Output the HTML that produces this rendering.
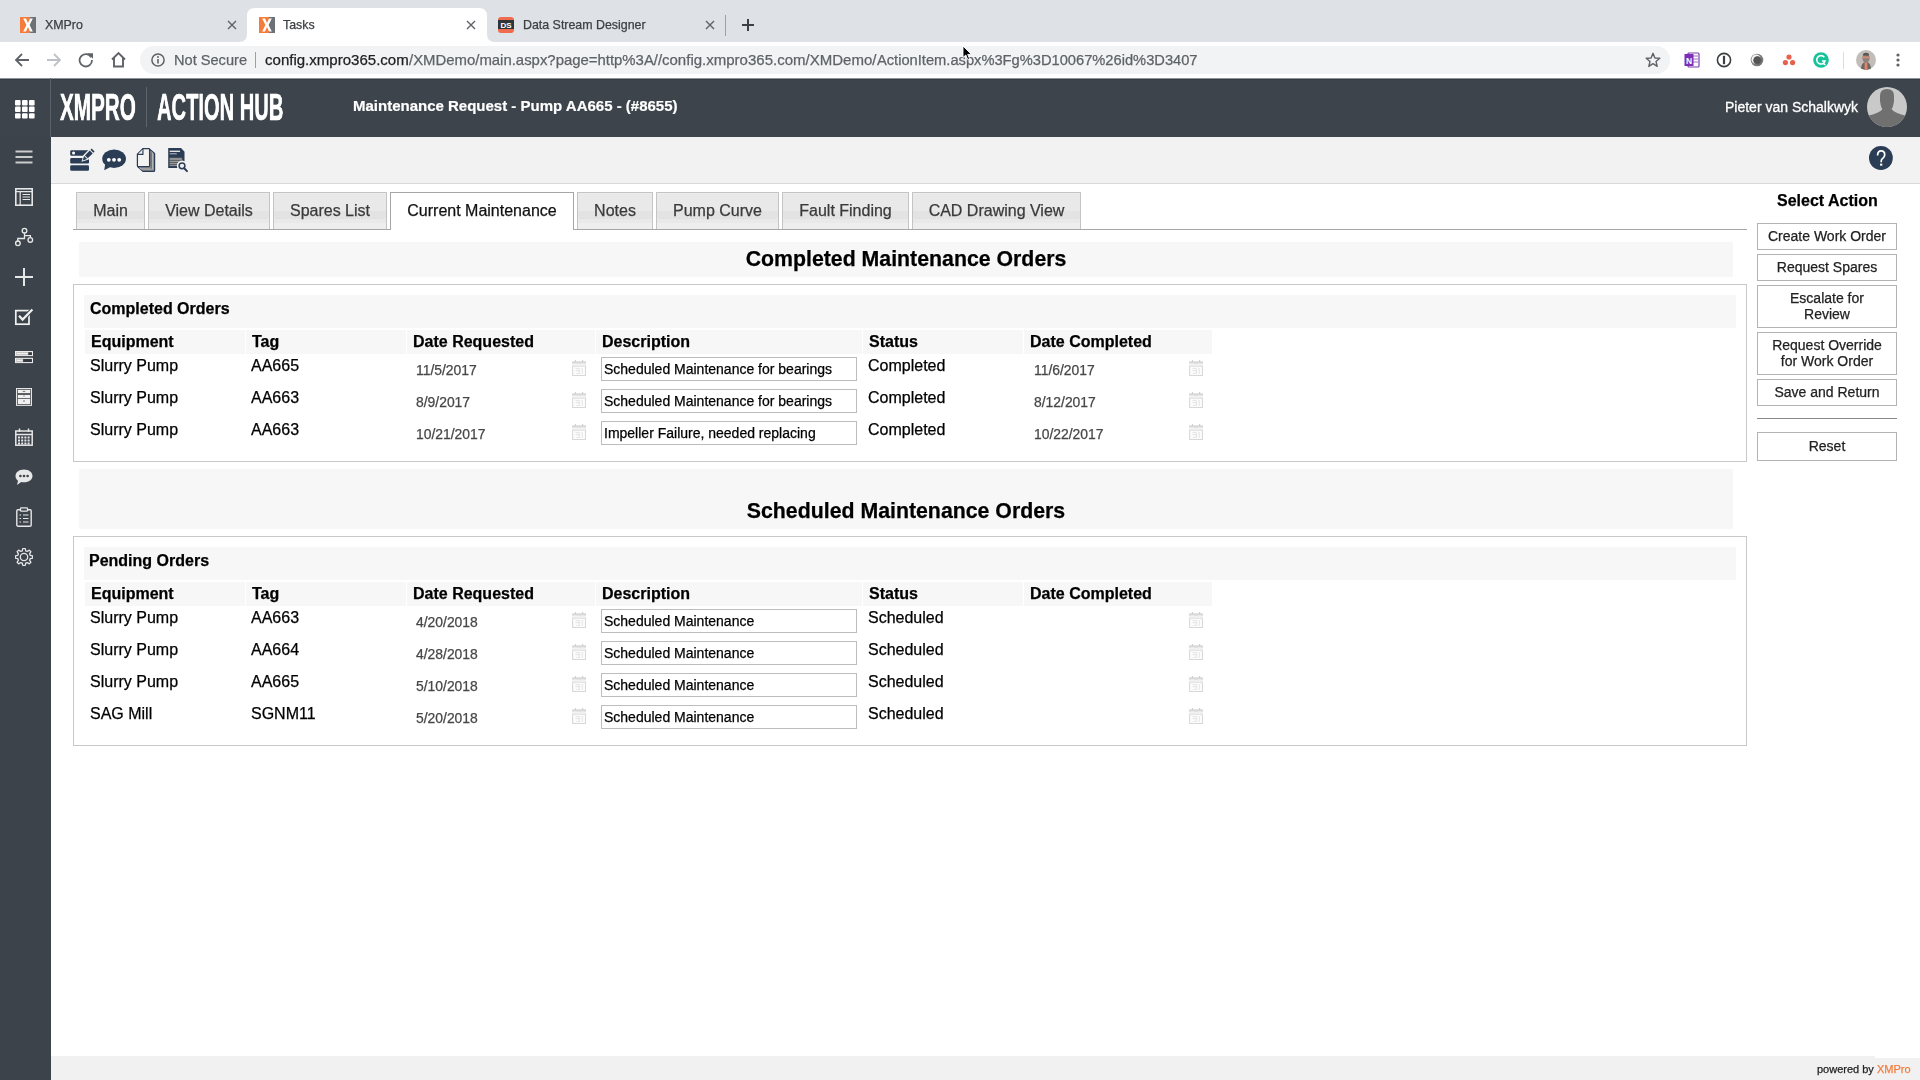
<!DOCTYPE html>
<html><head><meta charset="utf-8"><title>Tasks</title>
<style>
*{box-sizing:border-box;margin:0;padding:0}
html,body{width:1920px;height:1080px;overflow:hidden;background:#fff;font-family:"Liberation Sans",sans-serif;color:#000}
.r{position:absolute;display:block}
.t{position:absolute;white-space:nowrap;font-family:"Liberation Sans",sans-serif;will-change:transform;-webkit-text-stroke:0.25px currentColor}
.logo{color:#fff;font-weight:bold;transform-origin:0 0;letter-spacing:0;-webkit-text-stroke:0.7px #fff}
.tab{border:1px solid #c4c4c4;border-bottom:none;background:linear-gradient(to bottom,#ededed 0,#ededed 1px,#e9e9e9 1px,#e9e9e9 18px,#e3e3e3 18px,#e3e3e3 25px,#e9e9e9 25px,#e9e9e9 30px,#eeeeee 30px)}
.tab::after{content:'';position:absolute;left:2px;right:2px;top:25px;border-top:1px dotted #dadada}
.tab.act::after{display:none}
.tab.act{background:#fff;border-color:#a6a6a6}
</style></head><body>
<div class="r" style="left:0px;top:0px;width:1920px;height:42px;background:#dee1e6"></div>
<svg class="r" style="left:239px;top:8px" width="256" height="34" viewBox="0 0 256 34"><path d="M0 34 Q8 34 8 26 L8 8 Q8 0 16 0 L240 0 Q248 0 248 8 L248 26 Q248 34 256 34 Z" fill="#fff"/></svg>
<svg class="r" style="left:20px;top:17px;" width="16" height="16" viewBox="0 0 16 16"><rect x="0" y="0" width="10" height="16" fill="#f47c3c"/><rect x="10" y="0" width="6" height="16" fill="#6d7278"/><path d="M3.2 1.5 L6 1.5 L8 6 L10 1.5 L12.8 1.5 L9.6 8 L12.8 14.5 L10 14.5 L8 10 L6 14.5 L3.2 14.5 L6.4 8 Z" fill="#fff"/></svg>
<div class="t" style="left:44.5px;top:18px;font-size:12.4px;line-height:15px;font-weight:normal;color:#3c4043;">XMPro</div>
<svg class="r" style="left:259px;top:17px;" width="16" height="16" viewBox="0 0 16 16"><rect x="0" y="0" width="10" height="16" fill="#f47c3c"/><rect x="10" y="0" width="6" height="16" fill="#6d7278"/><path d="M3.2 1.5 L6 1.5 L8 6 L10 1.5 L12.8 1.5 L9.6 8 L12.8 14.5 L10 14.5 L8 10 L6 14.5 L3.2 14.5 L6.4 8 Z" fill="#fff"/></svg>
<div class="t" style="left:283px;top:18px;font-size:12.4px;line-height:15px;font-weight:normal;color:#3c4043;">Tasks</div>
<svg class="r" style="left:498px;top:17px;" width="16" height="16" viewBox="0 0 16 16"><rect x="0" y="0" width="16" height="16" rx="3" fill="#ee6b4d"/><rect x="0" y="3" width="16" height="9" fill="#2f3439"/><text x="8" y="10.6" font-family="Liberation Sans" font-weight="bold" font-size="8" fill="#fff" text-anchor="middle">DS</text></svg>
<div class="t" style="left:522.5px;top:18px;font-size:12.4px;line-height:15px;font-weight:normal;color:#3c4043;">Data Stream Designer</div>
<svg class="r" style="left:227px;top:20px;" width="10" height="10" viewBox="0 0 10 10"><path d="M1 1 L9 9 M9 1 L1 9" stroke="#5f6368" stroke-width="1.4"/></svg>
<svg class="r" style="left:466px;top:20px;" width="10" height="10" viewBox="0 0 10 10"><path d="M1 1 L9 9 M9 1 L1 9" stroke="#5f6368" stroke-width="1.4"/></svg>
<svg class="r" style="left:705px;top:20px;" width="10" height="10" viewBox="0 0 10 10"><path d="M1 1 L9 9 M9 1 L1 9" stroke="#5f6368" stroke-width="1.4"/></svg>
<div class="r" style="left:725px;top:15px;width:1px;height:21px;background:#9aa0a6"></div>
<svg class="r" style="left:741px;top:18px;" width="14" height="14" viewBox="0 0 14 14"><path d="M7 1 V13 M1 7 H13" stroke="#3c4043" stroke-width="2"/></svg>
<div class="r" style="left:0px;top:42px;width:1920px;height:36px;background:#fff"></div>
<svg class="r" style="left:14px;top:52px;" width="16" height="16" viewBox="0 0 16 16"><path d="M15 8 H2.5 M8 2 L2 8 L8 14" stroke="#5f6368" stroke-width="1.8" fill="none"/></svg>
<svg class="r" style="left:46px;top:52px;" width="16" height="16" viewBox="0 0 16 16"><path d="M1 8 H13.5 M8 2 L14 8 L8 14" stroke="#bdc1c6" stroke-width="1.8" fill="none"/></svg>
<svg class="r" style="left:78px;top:52px;" width="16" height="16" viewBox="0 0 16 16"><path d="M13.2 5.2 A6.2 6.2 0 1 0 14 8" stroke="#5f6368" stroke-width="1.8" fill="none"/><path d="M9.5 1.2 L15 1.2 L15 6.8 Z" fill="#5f6368"/></svg>
<svg class="r" style="left:110px;top:51px;" width="17" height="17" viewBox="0 0 17 17"><path d="M2 8.5 L8.5 2 L15 8.5 M4 7 V15.5 H13 V7" stroke="#5f6368" stroke-width="1.9" fill="none" stroke-linejoin="miter"/></svg>
<div class="r" style="left:140px;top:46px;width:1530px;height:28px;background:#f1f3f4;border-radius:14px"></div>
<svg class="r" style="left:151px;top:53px;" width="14" height="14" viewBox="0 0 14 14"><circle cx="7" cy="7" r="6.1" stroke="#5f6368" stroke-width="1.5" fill="none"/><rect x="6.2" y="6" width="1.6" height="4.5" fill="#5f6368"/><circle cx="7" cy="4" r="0.95" fill="#5f6368"/></svg>
<div class="t" style="left:174.3px;top:51px;font-size:14.6px;line-height:18px;font-weight:normal;color:#5f6368;">Not Secure</div>
<div class="r" style="left:255px;top:52px;width:1px;height:16px;background:#9aa0a6"></div>
<div class="t" style="left:265.4px;top:51px;font-size:15.04px;line-height:18px;font-weight:normal;color:#202124;">config.xmpro365.com</div>
<div class="t" style="left:409.2px;top:51px;font-size:14.91px;line-height:18px;font-weight:normal;color:#5f6368;">/XMDemo/main.aspx?page=http%3A//</div>
<div class="t" style="left:662.4px;top:51px;font-size:15.02px;line-height:18px;font-weight:normal;color:#5f6368;">config.xmpro365.com/XMDemo/</div>
<div class="t" style="left:876.9px;top:51px;font-size:14.68px;line-height:18px;font-weight:normal;color:#5f6368;">ActionItem.aspx%3Fg%3D10067%26id%3D3407</div>
<svg class="r" style="left:1645px;top:52px;" width="16" height="16" viewBox="0 0 16 16"><path d="M8 1.3 L9.9 6 L14.8 6.3 L11 9.5 L12.2 14.4 L8 11.7 L3.8 14.4 L5 9.5 L1.2 6.3 L6.1 6 Z" stroke="#5f6368" stroke-width="1.4" fill="none" stroke-linejoin="round"/></svg>
<svg class="r" style="left:1684px;top:52px;" width="16" height="16" viewBox="0 0 16 16"><rect x="4" y="1" width="11" height="14" rx="1" fill="#fff" stroke="#7c3fb0" stroke-width="1.2"/><path d="M9 4 H14 M9 7 H14 M9 10 H14" stroke="#9e6cc9" stroke-width="1"/><rect x="0.5" y="2" width="9" height="12" fill="#7c2fb5"/><text x="5" y="11.5" font-family="Liberation Sans" font-weight="bold" font-size="8.5" fill="#fff" text-anchor="middle">N</text></svg>
<svg class="r" style="left:1716px;top:52px;" width="16" height="16" viewBox="0 0 16 16"><circle cx="8" cy="8" r="6.6" stroke="#3c4043" stroke-width="1.6" fill="none"/><path d="M8 3.8 V12.2" stroke="#3c4043" stroke-width="2.2"/></svg>
<svg class="r" style="left:1749px;top:52px;" width="16" height="16" viewBox="0 0 16 16"><circle cx="8" cy="8" r="6.3" fill="#7a7a7a"/><circle cx="7.2" cy="7.4" r="4.8" fill="#f4f4f4"/><circle cx="8.6" cy="8.5" r="4.3" fill="#6a6a6a"/><circle cx="8.2" cy="8.1" r="3.6" fill="#555"/></svg>
<svg class="r" style="left:1781px;top:52px;" width="16" height="16" viewBox="0 0 16 16"><circle cx="8" cy="5" r="2.6" fill="#e8604c"/><circle cx="4.4" cy="10.6" r="2.6" fill="#e8604c"/><circle cx="11.6" cy="10.6" r="2.6" fill="#e8604c"/></svg>
<svg class="r" style="left:1813px;top:52px;" width="16" height="16" viewBox="0 0 16 16"><circle cx="8" cy="8" r="7.8" fill="#15c39a"/><path d="M11.3 5.3 A4.2 4.2 0 1 0 12 9 L9 9 M10.4 11.3 L12.3 13" stroke="#fff" stroke-width="1.6" fill="none"/></svg>
<div class="r" style="left:1843px;top:52px;width:1px;height:17px;background:#dadce0"></div>
<svg class="r" style="left:1856px;top:50px;" width="20" height="20" viewBox="0 0 20 20"><defs><clipPath id="av"><circle cx="10" cy="10" r="10"/></clipPath></defs><g clip-path="url(#av)"><rect width="20" height="20" fill="#c2bdb8"/><path d="M5 20 Q5 12 10 12 Q15 12 15 20 Z" fill="#6d6763"/><ellipse cx="10" cy="8" rx="3.6" ry="4.6" fill="#8d817a"/><path d="M6.5 6.5 H13.5 V8.3 H6.5 Z" fill="#d98a72"/><path d="M7 4 Q10 1.5 13 4 L13 5.5 L7 5.5 Z" fill="#555"/><rect x="8.6" y="12.5" width="2.8" height="7.5" fill="#e0866c"/></g></svg>
<svg class="r" style="left:1895px;top:52px;" width="6" height="16" viewBox="0 0 6 16"><circle cx="3" cy="3" r="1.6" fill="#5f6368"/><circle cx="3" cy="8" r="1.6" fill="#5f6368"/><circle cx="3" cy="13" r="1.6" fill="#5f6368"/></svg>
<div class="r" style="left:0px;top:78px;width:1920px;height:59px;background:#3d444b"></div>
<div class="r" style="left:0px;top:78px;width:1920px;height:1px;background:#8e9398"></div>
<div class="r" style="left:0px;top:79px;width:1920px;height:1px;background:#353c43"></div>
<div class="r" style="left:50px;top:78px;width:1px;height:59px;background:#596067"></div>
<div class="r" style="left:0px;top:137px;width:51px;height:943px;background:#3c434a"></div>
<svg class="r" style="left:15px;top:100px;" width="20" height="19" viewBox="0 0 20 19"><rect x="0" y="0.0" width="5.6" height="5.4" rx="1" fill="#fff"/><rect x="7" y="0.0" width="5.6" height="5.4" rx="1" fill="#fff"/><rect x="14" y="0.0" width="5.6" height="5.4" rx="1" fill="#fff"/><rect x="0" y="6.6" width="5.6" height="5.4" rx="1" fill="#fff"/><rect x="7" y="6.6" width="5.6" height="5.4" rx="1" fill="#fff"/><rect x="14" y="6.6" width="5.6" height="5.4" rx="1" fill="#fff"/><rect x="0" y="13.2" width="5.6" height="5.4" rx="1" fill="#fff"/><rect x="7" y="13.2" width="5.6" height="5.4" rx="1" fill="#fff"/><rect x="14" y="13.2" width="5.6" height="5.4" rx="1" fill="#fff"/></svg>
<div class="t logo" style="left:60px;top:87.5px;font-size:36.8px;line-height:40px;transform:scaleX(0.562)">XMPRO</div>
<div class="r" style="left:146px;top:87px;width:1px;height:40px;background:#5d646b"></div>
<div class="t logo" style="left:157px;top:87.5px;font-size:36.8px;line-height:40px;transform:scaleX(0.547)">ACTION HUB</div>
<div class="t" style="left:353.3px;top:97px;font-size:15px;line-height:18px;font-weight:bold;color:#fff;-webkit-text-stroke:0.2px #fff;">Maintenance Request - Pump AA665 - (#8655)</div>
<div class="t" style="left:1724.7px;top:99px;font-size:14px;line-height:17px;font-weight:normal;color:#fff;-webkit-text-stroke:0.3px #fff;">Pieter van Schalkwyk</div>
<svg class="r" style="left:1867px;top:87px;" width="40" height="40" viewBox="0 0 40 40"><defs><clipPath id="avc"><circle cx="20" cy="20" r="20"/></clipPath></defs><g clip-path="url(#avc)"><rect width="40" height="40" fill="#c9c9c9"/><path d="M13 9 Q13 2 20 2 Q27 2 27 9 L27 14 Q26 21 24.5 22 Q27 26 40 29 L40 40 L0 40 L0 29 Q13 26 15.5 22 Q14 21 13 14 Z" fill="#707070"/></g></svg>
<svg class="r" style="left:15px;top:150px;" width="18" height="14" viewBox="0 0 18 14"><path d="M0.5 1.5 H17.5 M0.5 7 H17.5 M0.5 12.5 H17.5" stroke="#c9cbcd" stroke-width="1.8"/></svg>
<svg class="r" style="left:15px;top:188px;" width="18" height="18" viewBox="0 0 18 18"><rect x="0.8" y="0.8" width="16.4" height="16.4" fill="none" stroke="#e6e7e8" stroke-width="1.6"/><path d="M0.8 3.6 H17.2 M5.2 3.6 V17.2 M7.5 6.5 H15 M7.5 9 H15 M7.5 11.5 H15" stroke="#e6e7e8" stroke-width="1.2"/></svg>
<svg class="r" style="left:12px;top:224px;" width="24" height="26" viewBox="0 0 24 26"><circle cx="12.5" cy="6.7" r="2.3" fill="none" stroke="#e6e7e8" stroke-width="1.35"/><circle cx="5.9" cy="19.3" r="2.3" fill="none" stroke="#e6e7e8" stroke-width="1.35"/><circle cx="18.3" cy="15.9" r="2.3" fill="none" stroke="#e6e7e8" stroke-width="1.35"/><path d="M12.5 9 V14.5 H5.8 V17 M12.5 11.6 H18.4 V13.6" stroke="#e6e7e8" stroke-width="1.3" fill="none"/></svg>
<svg class="r" style="left:15px;top:268px;" width="18" height="18" viewBox="0 0 18 18"><path d="M9 0 V18 M0 9 H18" stroke="#e6e7e8" stroke-width="2"/></svg>
<svg class="r" style="left:12px;top:305px;" width="24" height="24" viewBox="0 0 24 24"><rect x="3.8" y="5.6" width="13.2" height="13.6" fill="none" stroke="#f0f0f0" stroke-width="1.7"/><path d="M7 10.8 L10.6 14.6 L20.4 4.4" stroke="#3d444b" stroke-width="4.2" fill="none"/><path d="M7 10.8 L10.6 14.6 L20.4 4.4" stroke="#f0f0f0" stroke-width="2.2" fill="none"/></svg>
<svg class="r" style="left:12px;top:346px;" width="24" height="22" viewBox="0 0 24 22"><rect x="3.5" y="5.5" width="17" height="4.1" fill="#c4c4c4" stroke="#ececec" stroke-width="1"/><rect x="16.3" y="6.2" width="3.6" height="2.8" fill="#33393f"/><path d="M4.8 7.6 H15.8" stroke="#f4f4f4" stroke-width="1"/><rect x="3.5" y="12.3" width="17" height="4.3" fill="#c4c4c4" stroke="#ececec" stroke-width="1"/><rect x="11.1" y="13" width="8.8" height="3" fill="#33393f"/><path d="M4.8 14.4 H10.6" stroke="#f4f4f4" stroke-width="1"/></svg>
<svg class="r" style="left:12px;top:384px;" width="24" height="26" viewBox="0 0 24 26"><rect x="4" y="4" width="16" height="17.9" fill="#e6e6e6"/><rect x="5" y="5" width="14" height="15.9" fill="#5b5f64"/><rect x="5.9" y="5.9" width="12.2" height="3.1" fill="#f0f0f0"/><rect x="5.9" y="11" width="12.2" height="3" fill="#f0f0f0"/><rect x="5.9" y="14.9" width="12.2" height="5.1" fill="#f0f0f0"/><ellipse cx="12" cy="7.35" rx="1.6" ry="0.7" fill="#7a7a7a"/><ellipse cx="12" cy="12" rx="1" ry="0.7" fill="#aaa"/><ellipse cx="12" cy="17" rx="1.2" ry="0.9" fill="#aaa"/></svg>
<svg class="r" style="left:15px;top:428px;" width="18" height="18" viewBox="0 0 18 18"><rect x="0.8" y="3" width="16.4" height="14.2" fill="none" stroke="#e6e7e8" stroke-width="1.5"/><path d="M0.8 6.5 H17.2 M4.5 0.5 V4 M13.5 0.5 V4" stroke="#e6e7e8" stroke-width="1.5"/><rect x="3.0" y="8.5" width="2" height="2" fill="#e6e7e8"/><rect x="6.2" y="8.5" width="2" height="2" fill="#e6e7e8"/><rect x="9.4" y="8.5" width="2" height="2" fill="#e6e7e8"/><rect x="12.600000000000001" y="8.5" width="2" height="2" fill="#e6e7e8"/><rect x="3.0" y="11.5" width="2" height="2" fill="#e6e7e8"/><rect x="6.2" y="11.5" width="2" height="2" fill="#e6e7e8"/><rect x="9.4" y="11.5" width="2" height="2" fill="#e6e7e8"/><rect x="12.600000000000001" y="11.5" width="2" height="2" fill="#e6e7e8"/><rect x="3.0" y="14.5" width="2" height="2" fill="#e6e7e8"/><rect x="6.2" y="14.5" width="2" height="2" fill="#e6e7e8"/><rect x="9.4" y="14.5" width="2" height="2" fill="#e6e7e8"/><rect x="12.600000000000001" y="14.5" width="2" height="2" fill="#e6e7e8"/></svg>
<svg class="r" style="left:15px;top:468px;" width="18" height="18" viewBox="0 0 18 18"><path d="M9 1.5 C14 1.5 17.5 4.4 17.5 8 C17.5 11.6 14 14.3 9 14.3 C8 14.3 7 14.2 6.2 14 L2 17 L3 12.7 C1.4 11.5 0.5 9.9 0.5 8 C0.5 4.4 4 1.5 9 1.5 Z" fill="#e6e7e8"/><circle cx="5.4" cy="8" r="1.3" fill="#3c434a"/><circle cx="9" cy="8" r="1.3" fill="#3c434a"/><circle cx="12.6" cy="8" r="1.3" fill="#3c434a"/></svg>
<svg class="r" style="left:16px;top:507px;" width="16" height="20" viewBox="0 0 16 20"><rect x="0.8" y="2.8" width="14.4" height="16.4" rx="1.2" fill="none" stroke="#e6e7e8" stroke-width="1.4"/><rect x="4.5" y="0.8" width="7" height="3.4" rx="0.8" fill="#3c434a" stroke="#e6e7e8" stroke-width="1.3"/><path d="M3.5 8 H5 M7 8 H12.5 M3.5 11.5 H5 M7 11.5 H12.5 M3.5 15 H5 M7 15 H12.5" stroke="#e6e7e8" stroke-width="1.2"/></svg>
<svg class="r" style="left:15px;top:548px;" width="18" height="18" viewBox="0 0 18 18"><path d="M15.17 7.29 L17.63 7.87 L17.63 10.13 L15.17 10.71 L14.57 12.15 L15.90 14.30 L14.30 15.90 L12.15 14.57 L10.71 15.17 L10.13 17.63 L7.87 17.63 L7.29 15.17 L5.85 14.57 L3.70 15.90 L2.10 14.30 L3.43 12.15 L2.83 10.71 L0.37 10.13 L0.37 7.87 L2.83 7.29 L3.43 5.85 L2.10 3.70 L3.70 2.10 L5.85 3.43 L7.29 2.83 L7.87 0.37 L10.13 0.37 L10.71 2.83 L12.15 3.43 L14.30 2.10 L15.90 3.70 L14.57 5.85 Z" fill="none" stroke="#e6e7e8" stroke-width="1.3" stroke-linejoin="round"/><circle cx="9" cy="9" r="3.7" fill="none" stroke="#e6e7e8" stroke-width="1.3"/></svg>
<div class="r" style="left:51px;top:137px;width:1869px;height:46px;background:#f2f2f2"></div>
<div class="r" style="left:51px;top:183px;width:1869px;height:1px;background:#d9d9d9"></div>
<svg class="r" style="left:66px;top:144px;" width="32" height="32" viewBox="0 0 32 32"><rect x="4.2" y="6.2" width="19" height="5.6" rx="1.3" fill="#2b3d55"/><rect x="4.2" y="14.1" width="18.8" height="5.4" rx="1.3" fill="#2b3d55"/><rect x="4.2" y="21.3" width="18.8" height="5.5" rx="1.3" fill="#2b3d55"/><circle cx="7.55" cy="9.1" r="1.5" fill="#fff"/><polygon points="15.47,17.73 17.45,11.08 25.72,2.81 30.39,7.48 22.12,15.75" fill="#f2f2f2"/><polygon points="16.60,16.60 18.19,12.11 21.09,15.01" fill="#2b3d55"/><polygon points="18.90,11.40 23.78,6.52 26.68,9.42 21.80,14.30" fill="#2b3d55"/><polygon points="24.48,5.82 25.69,4.61 28.59,7.51 27.38,8.72" fill="#2b3d55"/></svg>
<svg class="r" style="left:98px;top:144px;" width="32" height="32" viewBox="0 0 32 32"><ellipse cx="16.1" cy="14.8" rx="11.9" ry="9.2" fill="#2b3d55"/><path d="M7.2 19.8 L6.2 26.2 L12 23.3 Z" fill="#2b3d55"/><circle cx="10.8" cy="15.85" r="1.9" fill="#fff"/><circle cx="16" cy="15.85" r="1.9" fill="#fff"/><circle cx="21.2" cy="15.85" r="1.9" fill="#fff"/></svg>
<svg class="r" style="left:130px;top:144px;" width="32" height="32" viewBox="0 0 32 32"><path d="M19.6 5.3 L24.6 9.5 V26.4 Q24.6 27.3 23.7 27.3 H13 Q12.3 27.3 12.1 26.6 L7.6 22.5 Z" fill="#8a8a8a" stroke="#2b3d55" stroke-width="1.2" stroke-linejoin="round"/><path d="M20.6 7.5 L22.6 9.2 V25 H11.2 L9.4 23.3" fill="none" stroke="#b4b4b4" stroke-width="1.1"/><path d="M21.2 7.4 V24.8" stroke="#6a6a6a" stroke-width="0.9"/><path d="M12.9 4.6 H18.8 Q19.6 4.6 19.6 5.4 V21.7 Q19.6 22.5 18.8 22.5 H8.2 Q7.4 22.5 7.4 21.7 V10.1 Z" fill="#f2f2f2" stroke="#2b3d55" stroke-width="1.25" stroke-linejoin="round"/><path d="M12.9 4.6 V10.3 H7.4" fill="none" stroke="#2b3d55" stroke-width="1.2"/><path d="M9 9.6 L12.4 6.2" stroke="#f2f2f2" stroke-width="0.8"/></svg>
<svg class="r" style="left:162px;top:144px;" width="32" height="32" viewBox="0 0 32 32"><path d="M6.2 4.1 H19 L22.5 7.7 V24 H6.2 Z" fill="#2b3d55"/><rect x="7.4" y="13.7" width="13" height="9.6" fill="#5c5f64"/><rect x="7.8" y="13.9" width="12" height="2.1" fill="#929292"/><rect x="7.8" y="16.9" width="12" height="1.1" fill="#9a9a9a"/><rect x="7.8" y="19" width="12" height="0.9" fill="#a0a0a0"/><rect x="7.8" y="21" width="12" height="0.7" fill="#a8a8a8"/><rect x="6.8" y="22.2" width="9" height="1.8" fill="#2b3d55"/><path d="M7.7 7.26 H18" stroke="#fff" stroke-width="1.2"/><path d="M7.7 9.8 H14.8" stroke="#c9ccd0" stroke-width="0.9"/><circle cx="20" cy="21.8" r="5.2" fill="#f2f2f2"/><path d="M22.3 24.3 L25.5 27.6" stroke="#f2f2f2" stroke-width="4"/><circle cx="20" cy="21.8" r="2.9" fill="#eeeeee" stroke="#2b3d55" stroke-width="1.5"/><path d="M22.2 24.2 L25 27.1" stroke="#2b3d55" stroke-width="2" stroke-linecap="round"/></svg>
<svg class="r" style="left:1868px;top:146px;" width="25" height="25" viewBox="0 0 25 25"><circle cx="12.9" cy="12" r="11.9" fill="#2b3d55"/><path d="M9.6 9.6 Q9.6 4.9 13.1 4.9 Q16.7 4.9 16.7 8.7 Q16.7 10.9 14.7 12.4 Q13.2 13.5 13.2 15.2 V16.3" stroke="#fff" stroke-width="1.7" fill="none"/><rect x="12.1" y="17.6" width="2.2" height="2.1" fill="#fff"/></svg>
<div class="r" style="left:73px;top:229px;width:1674px;height:1px;background:#a6a6a6"></div>
<div class="r tab" style="left:76px;top:192px;width:69px;height:37px"></div>
<div class="t" style="left:76px;top:201px;width:69px;text-align:center;font-size:16px;line-height:19px;color:#3a3a3a">Main</div>
<div class="r tab" style="left:148px;top:192px;width:122px;height:37px"></div>
<div class="t" style="left:148px;top:201px;width:122px;text-align:center;font-size:16px;line-height:19px;color:#3a3a3a">View Details</div>
<div class="r tab" style="left:273px;top:192px;width:114px;height:37px"></div>
<div class="t" style="left:273px;top:201px;width:114px;text-align:center;font-size:16px;line-height:19px;color:#3a3a3a">Spares List</div>
<div class="r tab act" style="left:390px;top:192px;width:184px;height:38px"></div>
<div class="t" style="left:390px;top:201px;width:184px;text-align:center;font-size:16px;line-height:19px;color:#111">Current Maintenance</div>
<div class="r tab" style="left:577px;top:192px;width:76px;height:37px"></div>
<div class="t" style="left:577px;top:201px;width:76px;text-align:center;font-size:16px;line-height:19px;color:#3a3a3a">Notes</div>
<div class="r tab" style="left:656px;top:192px;width:123px;height:37px"></div>
<div class="t" style="left:656px;top:201px;width:123px;text-align:center;font-size:16px;line-height:19px;color:#3a3a3a">Pump Curve</div>
<div class="r tab" style="left:782px;top:192px;width:127px;height:37px"></div>
<div class="t" style="left:782px;top:201px;width:127px;text-align:center;font-size:16px;line-height:19px;color:#3a3a3a">Fault Finding</div>
<div class="r tab" style="left:912px;top:192px;width:169px;height:37px"></div>
<div class="t" style="left:912px;top:201px;width:169px;text-align:center;font-size:16px;line-height:19px;color:#3a3a3a">CAD Drawing View</div>
<div class="r" style="left:79px;top:242px;width:1654px;height:35px;background:#f7f7f7"></div>
<div class="t" style="left:79px;top:247px;width:1654px;text-align:center;font-size:21.3px;line-height:25px;font-weight:bold">Completed Maintenance Orders</div>
<div class="r" style="left:73px;top:284px;width:1674px;height:178px;border:1px solid #c8c8c8"></div>
<div class="r" style="left:84px;top:295px;width:1652px;height:33px;background:#f7f7f7"></div>
<div class="t" style="left:89.7px;top:299px;font-size:16px;line-height:19px;font-weight:bold;color:#000;">Completed Orders</div>
<div class="r" style="left:85px;top:330px;width:160px;height:24px;background:#f7f7f7"></div>
<div class="t" style="left:91.2px;top:332px;font-size:16px;line-height:19px;font-weight:bold;color:#000;">Equipment</div>
<div class="r" style="left:246px;top:330px;width:160px;height:24px;background:#f7f7f7"></div>
<div class="t" style="left:251.5px;top:332px;font-size:16px;line-height:19px;font-weight:bold;color:#000;">Tag</div>
<div class="r" style="left:407px;top:330px;width:188px;height:24px;background:#f7f7f7"></div>
<div class="t" style="left:413px;top:332px;font-size:16px;line-height:19px;font-weight:bold;color:#000;">Date Requested</div>
<div class="r" style="left:596px;top:330px;width:266px;height:24px;background:#f7f7f7"></div>
<div class="t" style="left:602px;top:332px;font-size:16px;line-height:19px;font-weight:bold;color:#000;">Description</div>
<div class="r" style="left:863px;top:330px;width:160px;height:24px;background:#f7f7f7"></div>
<div class="t" style="left:869px;top:332px;font-size:16px;line-height:19px;font-weight:bold;color:#000;">Status</div>
<div class="r" style="left:1024px;top:330px;width:188px;height:24px;background:#f7f7f7"></div>
<div class="t" style="left:1029.7px;top:332px;font-size:16px;line-height:19px;font-weight:bold;color:#000;">Date Completed</div>
<div class="t" style="left:90.3px;top:356px;font-size:16px;line-height:19px;font-weight:normal;color:#000;">Slurry Pump</div>
<div class="t" style="left:250.8px;top:356px;font-size:16px;line-height:19px;font-weight:normal;color:#000;">AA665</div>
<div class="t" style="left:416.2px;top:362px;font-size:13.9px;line-height:17px;font-weight:normal;color:#474747;">11/5/2017</div>
<svg class="r" style="left:568px;top:356px;" width="22" height="22" viewBox="0 0 22 22"><rect x="4.1" y="5.3" width="13.9" height="2.4" fill="#d8d8d8"/><rect x="6.9" y="4" width="1.2" height="2.3" fill="#cdd1d6"/><rect x="14" y="4" width="1.2" height="2.3" fill="#cdd1d6"/><rect x="6.3" y="7.2" width="2.4" height="0.6" fill="#eef0f2"/><rect x="13.4" y="7.2" width="2.4" height="0.6" fill="#eef0f2"/><rect x="4.1" y="8" width="13.9" height="1.2" fill="#f2f2f2"/><rect x="4.6" y="10.1" width="12.9" height="9.4" fill="#fbfbfb" stroke="#d8d8d8" stroke-width="1"/><path d="M7.6 12.6 H11.4 V17.5 H8.2 M7.6 14.6 H11.4 M13.4 12.6 H14.3 V17.7" fill="none" stroke="#e3e3e3" stroke-width="0.9"/></svg>
<div class="r" style="left:601px;top:357px;width:256px;height:24px;border:1px solid #bdbdbd;background:#fff"></div>
<div class="t" style="left:604.2px;top:360.5px;font-size:14px;line-height:17px;font-weight:normal;color:#000;">Scheduled Maintenance for bearings</div>
<div class="t" style="left:868px;top:356px;font-size:16px;line-height:19px;font-weight:normal;color:#000;">Completed</div>
<div class="t" style="left:1033.8px;top:362px;font-size:13.9px;line-height:17px;font-weight:normal;color:#474747;">11/6/2017</div>
<svg class="r" style="left:1185px;top:356px;" width="22" height="22" viewBox="0 0 22 22"><rect x="4.1" y="5.3" width="13.9" height="2.4" fill="#d8d8d8"/><rect x="6.9" y="4" width="1.2" height="2.3" fill="#cdd1d6"/><rect x="14" y="4" width="1.2" height="2.3" fill="#cdd1d6"/><rect x="6.3" y="7.2" width="2.4" height="0.6" fill="#eef0f2"/><rect x="13.4" y="7.2" width="2.4" height="0.6" fill="#eef0f2"/><rect x="4.1" y="8" width="13.9" height="1.2" fill="#f2f2f2"/><rect x="4.6" y="10.1" width="12.9" height="9.4" fill="#fbfbfb" stroke="#d8d8d8" stroke-width="1"/><path d="M7.6 12.6 H11.4 V17.5 H8.2 M7.6 14.6 H11.4 M13.4 12.6 H14.3 V17.7" fill="none" stroke="#e3e3e3" stroke-width="0.9"/></svg>
<div class="t" style="left:90.3px;top:388px;font-size:16px;line-height:19px;font-weight:normal;color:#000;">Slurry Pump</div>
<div class="t" style="left:250.8px;top:388px;font-size:16px;line-height:19px;font-weight:normal;color:#000;">AA663</div>
<div class="t" style="left:416.2px;top:394px;font-size:13.9px;line-height:17px;font-weight:normal;color:#474747;">8/9/2017</div>
<svg class="r" style="left:568px;top:388px;" width="22" height="22" viewBox="0 0 22 22"><rect x="4.1" y="5.3" width="13.9" height="2.4" fill="#d8d8d8"/><rect x="6.9" y="4" width="1.2" height="2.3" fill="#cdd1d6"/><rect x="14" y="4" width="1.2" height="2.3" fill="#cdd1d6"/><rect x="6.3" y="7.2" width="2.4" height="0.6" fill="#eef0f2"/><rect x="13.4" y="7.2" width="2.4" height="0.6" fill="#eef0f2"/><rect x="4.1" y="8" width="13.9" height="1.2" fill="#f2f2f2"/><rect x="4.6" y="10.1" width="12.9" height="9.4" fill="#fbfbfb" stroke="#d8d8d8" stroke-width="1"/><path d="M7.6 12.6 H11.4 V17.5 H8.2 M7.6 14.6 H11.4 M13.4 12.6 H14.3 V17.7" fill="none" stroke="#e3e3e3" stroke-width="0.9"/></svg>
<div class="r" style="left:601px;top:389px;width:256px;height:24px;border:1px solid #bdbdbd;background:#fff"></div>
<div class="t" style="left:604.2px;top:392.5px;font-size:14px;line-height:17px;font-weight:normal;color:#000;">Scheduled Maintenance for bearings</div>
<div class="t" style="left:868px;top:388px;font-size:16px;line-height:19px;font-weight:normal;color:#000;">Completed</div>
<div class="t" style="left:1033.8px;top:394px;font-size:13.9px;line-height:17px;font-weight:normal;color:#474747;">8/12/2017</div>
<svg class="r" style="left:1185px;top:388px;" width="22" height="22" viewBox="0 0 22 22"><rect x="4.1" y="5.3" width="13.9" height="2.4" fill="#d8d8d8"/><rect x="6.9" y="4" width="1.2" height="2.3" fill="#cdd1d6"/><rect x="14" y="4" width="1.2" height="2.3" fill="#cdd1d6"/><rect x="6.3" y="7.2" width="2.4" height="0.6" fill="#eef0f2"/><rect x="13.4" y="7.2" width="2.4" height="0.6" fill="#eef0f2"/><rect x="4.1" y="8" width="13.9" height="1.2" fill="#f2f2f2"/><rect x="4.6" y="10.1" width="12.9" height="9.4" fill="#fbfbfb" stroke="#d8d8d8" stroke-width="1"/><path d="M7.6 12.6 H11.4 V17.5 H8.2 M7.6 14.6 H11.4 M13.4 12.6 H14.3 V17.7" fill="none" stroke="#e3e3e3" stroke-width="0.9"/></svg>
<div class="t" style="left:90.3px;top:420px;font-size:16px;line-height:19px;font-weight:normal;color:#000;">Slurry Pump</div>
<div class="t" style="left:250.8px;top:420px;font-size:16px;line-height:19px;font-weight:normal;color:#000;">AA663</div>
<div class="t" style="left:416.2px;top:426px;font-size:13.9px;line-height:17px;font-weight:normal;color:#474747;">10/21/2017</div>
<svg class="r" style="left:568px;top:420px;" width="22" height="22" viewBox="0 0 22 22"><rect x="4.1" y="5.3" width="13.9" height="2.4" fill="#d8d8d8"/><rect x="6.9" y="4" width="1.2" height="2.3" fill="#cdd1d6"/><rect x="14" y="4" width="1.2" height="2.3" fill="#cdd1d6"/><rect x="6.3" y="7.2" width="2.4" height="0.6" fill="#eef0f2"/><rect x="13.4" y="7.2" width="2.4" height="0.6" fill="#eef0f2"/><rect x="4.1" y="8" width="13.9" height="1.2" fill="#f2f2f2"/><rect x="4.6" y="10.1" width="12.9" height="9.4" fill="#fbfbfb" stroke="#d8d8d8" stroke-width="1"/><path d="M7.6 12.6 H11.4 V17.5 H8.2 M7.6 14.6 H11.4 M13.4 12.6 H14.3 V17.7" fill="none" stroke="#e3e3e3" stroke-width="0.9"/></svg>
<div class="r" style="left:601px;top:421px;width:256px;height:24px;border:1px solid #bdbdbd;background:#fff"></div>
<div class="t" style="left:604.2px;top:424.5px;font-size:14px;line-height:17px;font-weight:normal;color:#000;">Impeller Failure, needed replacing</div>
<div class="t" style="left:868px;top:420px;font-size:16px;line-height:19px;font-weight:normal;color:#000;">Completed</div>
<div class="t" style="left:1033.8px;top:426px;font-size:13.9px;line-height:17px;font-weight:normal;color:#474747;">10/22/2017</div>
<svg class="r" style="left:1185px;top:420px;" width="22" height="22" viewBox="0 0 22 22"><rect x="4.1" y="5.3" width="13.9" height="2.4" fill="#d8d8d8"/><rect x="6.9" y="4" width="1.2" height="2.3" fill="#cdd1d6"/><rect x="14" y="4" width="1.2" height="2.3" fill="#cdd1d6"/><rect x="6.3" y="7.2" width="2.4" height="0.6" fill="#eef0f2"/><rect x="13.4" y="7.2" width="2.4" height="0.6" fill="#eef0f2"/><rect x="4.1" y="8" width="13.9" height="1.2" fill="#f2f2f2"/><rect x="4.6" y="10.1" width="12.9" height="9.4" fill="#fbfbfb" stroke="#d8d8d8" stroke-width="1"/><path d="M7.6 12.6 H11.4 V17.5 H8.2 M7.6 14.6 H11.4 M13.4 12.6 H14.3 V17.7" fill="none" stroke="#e3e3e3" stroke-width="0.9"/></svg>
<div class="r" style="left:79px;top:469px;width:1654px;height:60px;background:#f7f7f7"></div>
<div class="t" style="left:79px;top:499px;width:1654px;text-align:center;font-size:21.3px;line-height:25px;font-weight:bold">Scheduled Maintenance Orders</div>
<div class="r" style="left:73px;top:536px;width:1674px;height:210px;border:1px solid #c8c8c8"></div>
<div class="r" style="left:84px;top:547px;width:1652px;height:33px;background:#f7f7f7"></div>
<div class="t" style="left:89.2px;top:551px;font-size:16px;line-height:19px;font-weight:bold;color:#000;">Pending Orders</div>
<div class="r" style="left:85px;top:582px;width:160px;height:24px;background:#f7f7f7"></div>
<div class="t" style="left:91.2px;top:584px;font-size:16px;line-height:19px;font-weight:bold;color:#000;">Equipment</div>
<div class="r" style="left:246px;top:582px;width:160px;height:24px;background:#f7f7f7"></div>
<div class="t" style="left:251.5px;top:584px;font-size:16px;line-height:19px;font-weight:bold;color:#000;">Tag</div>
<div class="r" style="left:407px;top:582px;width:188px;height:24px;background:#f7f7f7"></div>
<div class="t" style="left:413px;top:584px;font-size:16px;line-height:19px;font-weight:bold;color:#000;">Date Requested</div>
<div class="r" style="left:596px;top:582px;width:266px;height:24px;background:#f7f7f7"></div>
<div class="t" style="left:602px;top:584px;font-size:16px;line-height:19px;font-weight:bold;color:#000;">Description</div>
<div class="r" style="left:863px;top:582px;width:160px;height:24px;background:#f7f7f7"></div>
<div class="t" style="left:869px;top:584px;font-size:16px;line-height:19px;font-weight:bold;color:#000;">Status</div>
<div class="r" style="left:1024px;top:582px;width:188px;height:24px;background:#f7f7f7"></div>
<div class="t" style="left:1029.7px;top:584px;font-size:16px;line-height:19px;font-weight:bold;color:#000;">Date Completed</div>
<div class="t" style="left:90.3px;top:608px;font-size:16px;line-height:19px;font-weight:normal;color:#000;">Slurry Pump</div>
<div class="t" style="left:250.8px;top:608px;font-size:16px;line-height:19px;font-weight:normal;color:#000;">AA663</div>
<div class="t" style="left:416.2px;top:614px;font-size:13.9px;line-height:17px;font-weight:normal;color:#474747;">4/20/2018</div>
<svg class="r" style="left:568px;top:608px;" width="22" height="22" viewBox="0 0 22 22"><rect x="4.1" y="5.3" width="13.9" height="2.4" fill="#d8d8d8"/><rect x="6.9" y="4" width="1.2" height="2.3" fill="#cdd1d6"/><rect x="14" y="4" width="1.2" height="2.3" fill="#cdd1d6"/><rect x="6.3" y="7.2" width="2.4" height="0.6" fill="#eef0f2"/><rect x="13.4" y="7.2" width="2.4" height="0.6" fill="#eef0f2"/><rect x="4.1" y="8" width="13.9" height="1.2" fill="#f2f2f2"/><rect x="4.6" y="10.1" width="12.9" height="9.4" fill="#fbfbfb" stroke="#d8d8d8" stroke-width="1"/><path d="M7.6 12.6 H11.4 V17.5 H8.2 M7.6 14.6 H11.4 M13.4 12.6 H14.3 V17.7" fill="none" stroke="#e3e3e3" stroke-width="0.9"/></svg>
<div class="r" style="left:601px;top:609px;width:256px;height:24px;border:1px solid #bdbdbd;background:#fff"></div>
<div class="t" style="left:604.2px;top:612.5px;font-size:14px;line-height:17px;font-weight:normal;color:#000;">Scheduled Maintenance</div>
<div class="t" style="left:868px;top:608px;font-size:16px;line-height:19px;font-weight:normal;color:#000;">Scheduled</div>
<svg class="r" style="left:1185px;top:608px;" width="22" height="22" viewBox="0 0 22 22"><rect x="4.1" y="5.3" width="13.9" height="2.4" fill="#d8d8d8"/><rect x="6.9" y="4" width="1.2" height="2.3" fill="#cdd1d6"/><rect x="14" y="4" width="1.2" height="2.3" fill="#cdd1d6"/><rect x="6.3" y="7.2" width="2.4" height="0.6" fill="#eef0f2"/><rect x="13.4" y="7.2" width="2.4" height="0.6" fill="#eef0f2"/><rect x="4.1" y="8" width="13.9" height="1.2" fill="#f2f2f2"/><rect x="4.6" y="10.1" width="12.9" height="9.4" fill="#fbfbfb" stroke="#d8d8d8" stroke-width="1"/><path d="M7.6 12.6 H11.4 V17.5 H8.2 M7.6 14.6 H11.4 M13.4 12.6 H14.3 V17.7" fill="none" stroke="#e3e3e3" stroke-width="0.9"/></svg>
<div class="t" style="left:90.3px;top:640px;font-size:16px;line-height:19px;font-weight:normal;color:#000;">Slurry Pump</div>
<div class="t" style="left:250.8px;top:640px;font-size:16px;line-height:19px;font-weight:normal;color:#000;">AA664</div>
<div class="t" style="left:416.2px;top:646px;font-size:13.9px;line-height:17px;font-weight:normal;color:#474747;">4/28/2018</div>
<svg class="r" style="left:568px;top:640px;" width="22" height="22" viewBox="0 0 22 22"><rect x="4.1" y="5.3" width="13.9" height="2.4" fill="#d8d8d8"/><rect x="6.9" y="4" width="1.2" height="2.3" fill="#cdd1d6"/><rect x="14" y="4" width="1.2" height="2.3" fill="#cdd1d6"/><rect x="6.3" y="7.2" width="2.4" height="0.6" fill="#eef0f2"/><rect x="13.4" y="7.2" width="2.4" height="0.6" fill="#eef0f2"/><rect x="4.1" y="8" width="13.9" height="1.2" fill="#f2f2f2"/><rect x="4.6" y="10.1" width="12.9" height="9.4" fill="#fbfbfb" stroke="#d8d8d8" stroke-width="1"/><path d="M7.6 12.6 H11.4 V17.5 H8.2 M7.6 14.6 H11.4 M13.4 12.6 H14.3 V17.7" fill="none" stroke="#e3e3e3" stroke-width="0.9"/></svg>
<div class="r" style="left:601px;top:641px;width:256px;height:24px;border:1px solid #bdbdbd;background:#fff"></div>
<div class="t" style="left:604.2px;top:644.5px;font-size:14px;line-height:17px;font-weight:normal;color:#000;">Scheduled Maintenance</div>
<div class="t" style="left:868px;top:640px;font-size:16px;line-height:19px;font-weight:normal;color:#000;">Scheduled</div>
<svg class="r" style="left:1185px;top:640px;" width="22" height="22" viewBox="0 0 22 22"><rect x="4.1" y="5.3" width="13.9" height="2.4" fill="#d8d8d8"/><rect x="6.9" y="4" width="1.2" height="2.3" fill="#cdd1d6"/><rect x="14" y="4" width="1.2" height="2.3" fill="#cdd1d6"/><rect x="6.3" y="7.2" width="2.4" height="0.6" fill="#eef0f2"/><rect x="13.4" y="7.2" width="2.4" height="0.6" fill="#eef0f2"/><rect x="4.1" y="8" width="13.9" height="1.2" fill="#f2f2f2"/><rect x="4.6" y="10.1" width="12.9" height="9.4" fill="#fbfbfb" stroke="#d8d8d8" stroke-width="1"/><path d="M7.6 12.6 H11.4 V17.5 H8.2 M7.6 14.6 H11.4 M13.4 12.6 H14.3 V17.7" fill="none" stroke="#e3e3e3" stroke-width="0.9"/></svg>
<div class="t" style="left:90.3px;top:672px;font-size:16px;line-height:19px;font-weight:normal;color:#000;">Slurry Pump</div>
<div class="t" style="left:250.8px;top:672px;font-size:16px;line-height:19px;font-weight:normal;color:#000;">AA665</div>
<div class="t" style="left:416.2px;top:678px;font-size:13.9px;line-height:17px;font-weight:normal;color:#474747;">5/10/2018</div>
<svg class="r" style="left:568px;top:672px;" width="22" height="22" viewBox="0 0 22 22"><rect x="4.1" y="5.3" width="13.9" height="2.4" fill="#d8d8d8"/><rect x="6.9" y="4" width="1.2" height="2.3" fill="#cdd1d6"/><rect x="14" y="4" width="1.2" height="2.3" fill="#cdd1d6"/><rect x="6.3" y="7.2" width="2.4" height="0.6" fill="#eef0f2"/><rect x="13.4" y="7.2" width="2.4" height="0.6" fill="#eef0f2"/><rect x="4.1" y="8" width="13.9" height="1.2" fill="#f2f2f2"/><rect x="4.6" y="10.1" width="12.9" height="9.4" fill="#fbfbfb" stroke="#d8d8d8" stroke-width="1"/><path d="M7.6 12.6 H11.4 V17.5 H8.2 M7.6 14.6 H11.4 M13.4 12.6 H14.3 V17.7" fill="none" stroke="#e3e3e3" stroke-width="0.9"/></svg>
<div class="r" style="left:601px;top:673px;width:256px;height:24px;border:1px solid #bdbdbd;background:#fff"></div>
<div class="t" style="left:604.2px;top:676.5px;font-size:14px;line-height:17px;font-weight:normal;color:#000;">Scheduled Maintenance</div>
<div class="t" style="left:868px;top:672px;font-size:16px;line-height:19px;font-weight:normal;color:#000;">Scheduled</div>
<svg class="r" style="left:1185px;top:672px;" width="22" height="22" viewBox="0 0 22 22"><rect x="4.1" y="5.3" width="13.9" height="2.4" fill="#d8d8d8"/><rect x="6.9" y="4" width="1.2" height="2.3" fill="#cdd1d6"/><rect x="14" y="4" width="1.2" height="2.3" fill="#cdd1d6"/><rect x="6.3" y="7.2" width="2.4" height="0.6" fill="#eef0f2"/><rect x="13.4" y="7.2" width="2.4" height="0.6" fill="#eef0f2"/><rect x="4.1" y="8" width="13.9" height="1.2" fill="#f2f2f2"/><rect x="4.6" y="10.1" width="12.9" height="9.4" fill="#fbfbfb" stroke="#d8d8d8" stroke-width="1"/><path d="M7.6 12.6 H11.4 V17.5 H8.2 M7.6 14.6 H11.4 M13.4 12.6 H14.3 V17.7" fill="none" stroke="#e3e3e3" stroke-width="0.9"/></svg>
<div class="t" style="left:90.3px;top:704px;font-size:16px;line-height:19px;font-weight:normal;color:#000;">SAG Mill</div>
<div class="t" style="left:250.8px;top:704px;font-size:16px;line-height:19px;font-weight:normal;color:#000;">SGNM11</div>
<div class="t" style="left:416.2px;top:710px;font-size:13.9px;line-height:17px;font-weight:normal;color:#474747;">5/20/2018</div>
<svg class="r" style="left:568px;top:704px;" width="22" height="22" viewBox="0 0 22 22"><rect x="4.1" y="5.3" width="13.9" height="2.4" fill="#d8d8d8"/><rect x="6.9" y="4" width="1.2" height="2.3" fill="#cdd1d6"/><rect x="14" y="4" width="1.2" height="2.3" fill="#cdd1d6"/><rect x="6.3" y="7.2" width="2.4" height="0.6" fill="#eef0f2"/><rect x="13.4" y="7.2" width="2.4" height="0.6" fill="#eef0f2"/><rect x="4.1" y="8" width="13.9" height="1.2" fill="#f2f2f2"/><rect x="4.6" y="10.1" width="12.9" height="9.4" fill="#fbfbfb" stroke="#d8d8d8" stroke-width="1"/><path d="M7.6 12.6 H11.4 V17.5 H8.2 M7.6 14.6 H11.4 M13.4 12.6 H14.3 V17.7" fill="none" stroke="#e3e3e3" stroke-width="0.9"/></svg>
<div class="r" style="left:601px;top:705px;width:256px;height:24px;border:1px solid #bdbdbd;background:#fff"></div>
<div class="t" style="left:604.2px;top:708.5px;font-size:14px;line-height:17px;font-weight:normal;color:#000;">Scheduled Maintenance</div>
<div class="t" style="left:868px;top:704px;font-size:16px;line-height:19px;font-weight:normal;color:#000;">Scheduled</div>
<svg class="r" style="left:1185px;top:704px;" width="22" height="22" viewBox="0 0 22 22"><rect x="4.1" y="5.3" width="13.9" height="2.4" fill="#d8d8d8"/><rect x="6.9" y="4" width="1.2" height="2.3" fill="#cdd1d6"/><rect x="14" y="4" width="1.2" height="2.3" fill="#cdd1d6"/><rect x="6.3" y="7.2" width="2.4" height="0.6" fill="#eef0f2"/><rect x="13.4" y="7.2" width="2.4" height="0.6" fill="#eef0f2"/><rect x="4.1" y="8" width="13.9" height="1.2" fill="#f2f2f2"/><rect x="4.6" y="10.1" width="12.9" height="9.4" fill="#fbfbfb" stroke="#d8d8d8" stroke-width="1"/><path d="M7.6 12.6 H11.4 V17.5 H8.2 M7.6 14.6 H11.4 M13.4 12.6 H14.3 V17.7" fill="none" stroke="#e3e3e3" stroke-width="0.9"/></svg>
<div class="t" style="left:1776.7px;top:191px;font-size:16px;line-height:19px;font-weight:bold;color:#000;">Select Action</div>
<div class="r" style="left:1757px;top:223px;width:140px;height:27px;border:1px solid #b3b3b3;background:#fff"></div>
<div class="t" style="left:1757px;top:228px;width:140px;text-align:center;font-size:14px;line-height:16px;color:#222">Create Work Order</div>
<div class="r" style="left:1757px;top:254px;width:140px;height:27px;border:1px solid #b3b3b3;background:#fff"></div>
<div class="t" style="left:1757px;top:259px;width:140px;text-align:center;font-size:14px;line-height:16px;color:#222">Request Spares</div>
<div class="r" style="left:1757px;top:285px;width:140px;height:43px;border:1px solid #b3b3b3;background:#fff"></div>
<div class="t" style="left:1757px;top:290px;width:140px;text-align:center;font-size:14px;line-height:16px;color:#222">Escalate for</div>
<div class="t" style="left:1757px;top:306px;width:140px;text-align:center;font-size:14px;line-height:16px;color:#222">Review</div>
<div class="r" style="left:1757px;top:332px;width:140px;height:43px;border:1px solid #b3b3b3;background:#fff"></div>
<div class="t" style="left:1757px;top:337px;width:140px;text-align:center;font-size:14px;line-height:16px;color:#222">Request Override</div>
<div class="t" style="left:1757px;top:353px;width:140px;text-align:center;font-size:14px;line-height:16px;color:#222">for Work Order</div>
<div class="r" style="left:1757px;top:379px;width:140px;height:27px;border:1px solid #b3b3b3;background:#fff"></div>
<div class="t" style="left:1757px;top:384px;width:140px;text-align:center;font-size:14px;line-height:16px;color:#222">Save and Return</div>
<div class="r" style="left:1757px;top:418px;width:140px;height:1px;background:#888"></div>
<div class="r" style="left:1757px;top:432px;width:140px;height:29px;border:1px solid #b3b3b3;background:#fff"></div>
<div class="t" style="left:1757px;top:438px;width:140px;text-align:center;font-size:14px;line-height:16px;color:#222">Reset</div>
<div class="r" style="left:51px;top:1056px;width:1869px;height:24px;background:#f1f1f1"></div>
<div class="r" style="left:1875px;top:1056px;width:45px;height:2px;background:#fff"></div>
<div class="t" style="left:1816.7px;top:1063px;font-size:11px;line-height:13px;font-weight:normal;color:#222;">powered by <span style="color:#f47c3c">XMPro</span></div>
<svg class="r" style="left:962px;top:45.4px;" width="11" height="16" viewBox="0 0 11 16"><path d="M1 1 L1 12.5 L3.8 10 L5.8 14.6 L7.6 13.8 L5.7 9.4 L9.4 9.4 Z" fill="#000" stroke="#fff" stroke-width="0.9"/></svg>
</body></html>
